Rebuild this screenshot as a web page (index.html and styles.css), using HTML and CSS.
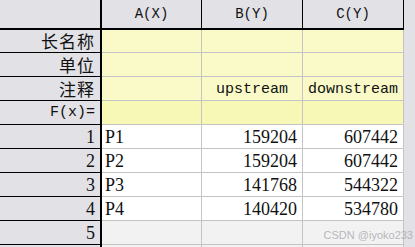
FILE: index.html
```html
<!DOCTYPE html>
<html>
<head>
    <title>Worksheet</title>
    <link rel="stylesheet" href="styles.css">
</head>
<body>
    <div class="sheet">
        <table class="grid">
            <thead>
                <tr class="head-row">
                    <th class="corner"></th>
                    <th class="col col-a">A(X)</th>
                    <th class="col col-b">B(Y)</th>
                    <th class="col col-c">C(Y)</th>
                </tr>
            </thead>
            <tbody>
                <tr class="meta first">
                    <th class="rowhead cjk">长名称</th>
                    <td></td><td></td><td></td>
                </tr>
                <tr class="meta">
                    <th class="rowhead cjk">单位</th>
                    <td></td><td></td><td></td>
                </tr>
                <tr class="meta">
                    <th class="rowhead cjk">注释</th>
                    <td></td><td class="mono">upstream</td><td class="mono">downstream</td>
                </tr>
                <tr class="meta formula">
                    <th class="rowhead mono">F(x)=</th>
                    <td></td><td></td><td></td>
                </tr>
                <tr class="data">
                    <th class="rowhead">1</th>
                    <td class="label">P1</td><td class="num">159204</td><td class="num">607442</td>
                </tr>
                <tr class="data">
                    <th class="rowhead">2</th>
                    <td class="label">P2</td><td class="num">159204</td><td class="num">607442</td>
                </tr>
                <tr class="data">
                    <th class="rowhead">3</th>
                    <td class="label">P3</td><td class="num">141768</td><td class="num">544322</td>
                </tr>
                <tr class="data">
                    <th class="rowhead">4</th>
                    <td class="label">P4</td><td class="num">140420</td><td class="num">534780</td>
                </tr>
                <tr class="data empty">
                    <th class="rowhead">5</th>
                    <td></td><td></td><td></td>
                </tr>
                <tr class="data empty">
                    <th class="rowhead"></th>
                    <td></td><td></td><td></td>
                </tr>
            </tbody>
        </table>
        <div class="watermark">CSDN @iyoko233</div>
    </div>
</body>
</html>
```
FILE: styles.css
```css
body {
    margin: 0;
    padding: 0;
    background: #e1e1e6;
    font-family: "Liberation Serif", serif;
    overflow: hidden;
}

.sheet {
    position: relative;
    width: 415px;
    height: 247px;
    overflow: hidden;
}

.grid {
    border-collapse: separate;
    border-spacing: 0;
    table-layout: fixed;
    width: 404px;
}

.grid th,
.grid td {
    padding: 0;
    box-sizing: border-box;
    font-weight: normal;
    color: #111;
    line-height: 18px;
    white-space: nowrap;
    border-right: 1px solid #c4c4c4;
    border-bottom: 1px solid #c4c4c4;
}

.head-row th {
    height: 30px;
    background: #e1e1e6;
    border-right: 1px solid #000;
    border-bottom: 2px solid #000;
    font-family: "Liberation Mono", monospace;
    font-size: 14px;
    text-align: center;
    vertical-align: middle;
}

.corner {
    width: 102px;
}

.head-row .corner {
    border-right: 2px solid #000;
}

.col-a {
    width: 100px;
}

.col-b,
.col-c {
    width: 101px;
}

.grid .rowhead {
    background: #e1e1e6;
    border-right: 2px solid #000;
    border-bottom: 1px solid #000;
    text-align: right;
    padding-right: 5px;
    font-size: 18px;
}

.cjk {
    font-family: "Noto Sans CJK SC", sans-serif;
    font-size: 17px !important;
    line-height: 22px !important;
    letter-spacing: 1px;
}

.mono {
    font-family: "Liberation Mono", monospace;
    font-size: 15px !important;
}

.meta th,
.meta td {
    height: 24px;
}

.meta.first th,
.meta.first td {
    height: 23px;
}

.meta td {
    background: #fafac8;
    text-align: center;
    padding-top: 2px;
}

.formula td {
    background: #f7f7b6;
}

.data th,
.data td {
    height: 24px;
}

.data td {
    background: #fff;
    font-size: 18px;
}

.data .label {
    padding-left: 3px;
}

.data .num {
    text-align: right;
    padding-right: 5px;
}

.empty td {
    background: #f2f2f2;
}

.watermark {
    position: absolute;
    right: 2px;
    bottom: 6px;
    font-family: "Liberation Sans", sans-serif;
    font-size: 11px;
    color: rgba(170, 170, 176, 0.85);
}
```
